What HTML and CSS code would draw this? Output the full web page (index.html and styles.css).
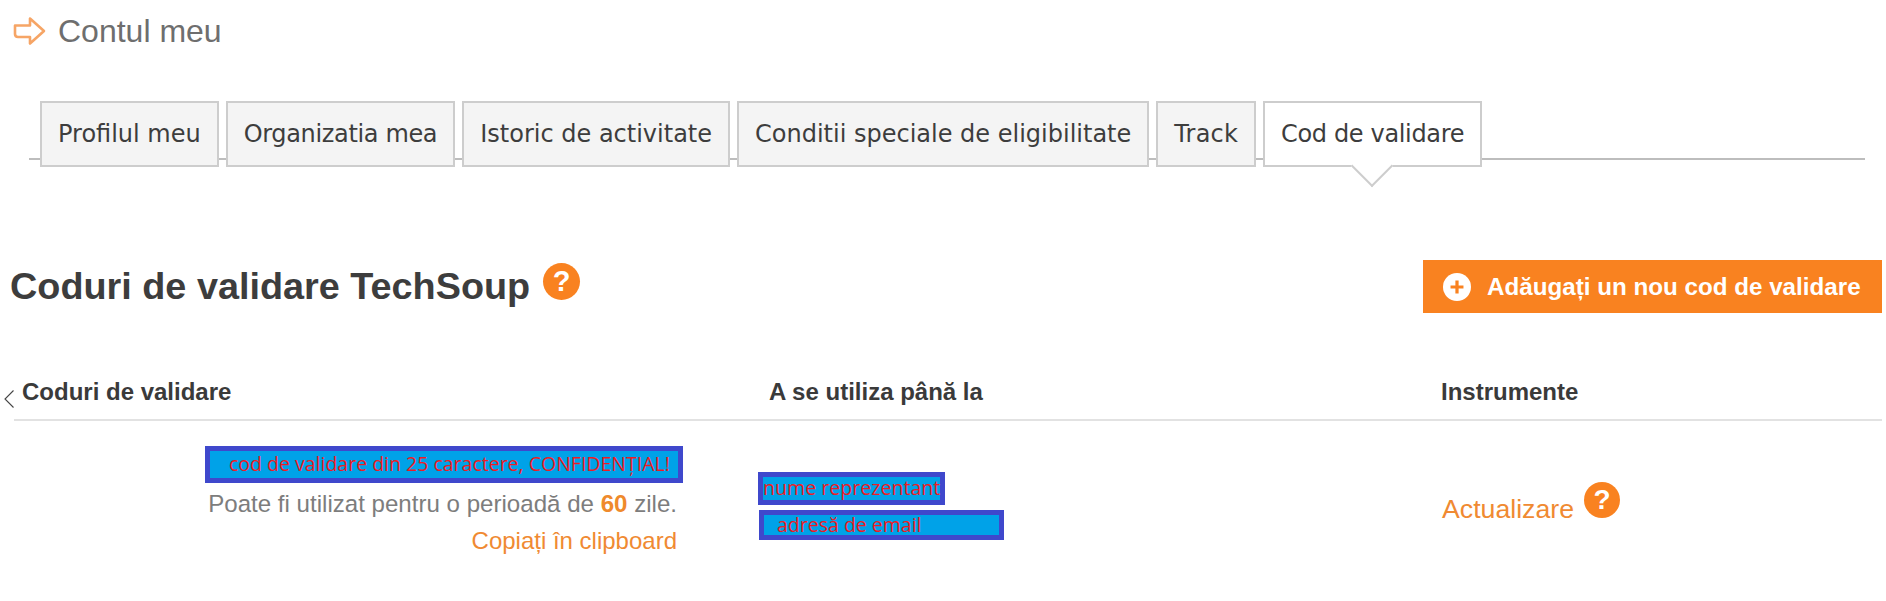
FILE: index.html
```html
<!DOCTYPE html>
<html lang="ro">
<head>
<meta charset="utf-8">
<title>Contul meu</title>
<link rel="stylesheet" href="styles.css">
</head>
<body>
<header class="page-title">
  <svg class="title-arrow" viewBox="0 0 35 30" aria-hidden="true"><path d="M3 9.500H18V2.500L32 15L18 27.500V21H6Q3 21 3 18Z" fill="none" stroke="#f6a566" stroke-width="2.600" stroke-linejoin="round"/></svg>
  <span>Contul meu</span>
</header>
<nav class="tabs">
  <a class="tab">Profilul meu</a>
  <a class="tab tab-tight">Organizatia mea</a>
  <a class="tab">Istoric de activitate</a>
  <a class="tab">Conditii speciale de eligibilitate</a>
  <a class="tab tab-loose">Track</a>
  <a class="tab tab-tight active">Cod de validare</a>
</nav>
<section class="heading-row">
  <div class="heading">
    <h1>Coduri de validare TechSoup</h1>
    <span class="help help-large">?</span>
  </div>
  <a class="add-btn"><span class="plus"><svg viewBox="0 0 26 26" aria-hidden="true"><circle cx="13" cy="13" r="13" fill="#fff"/><path d="M13 7V19M7 13H19" stroke="#f98220" stroke-width="3"/></svg></span>Adăugați un nou cod de validare</a>
</section>
<section class="codes">
  <div class="codes-head">
    <svg class="chevron" viewBox="0 0 10 18" aria-hidden="true"><path d="M9.500 .5L1 9L9.500 17.500" fill="none" stroke="#444" stroke-width="1.100"/></svg>
    <div class="col-code">Coduri de validare</div>
    <div class="col-date">A se utiliza până la</div>
    <div class="col-tools">Instrumente</div>
  </div>
  <div class="codes-row">
    <div class="col-code cell-code">
      <div class="mask mask-code">cod de validare din 25 caractere, CONFIDENȚIAL!</div>
      <p class="note">Poate fi utilizat pentru o perioadă de <b>60</b> zile.</p>
      <a class="link">Copiați în clipboard</a>
    </div>
    <div class="col-date cell-date">
      <div class="mask mask-name">nume reprezentant</div>
      <div class="mask mask-mail">adresă de email</div>
    </div>
    <div class="col-tools cell-tools">
      <a class="link link-large">Actualizare</a>
      <span class="help help-small">?</span>
    </div>
  </div>
</section>
</body>
</html>
```

FILE: styles.css
```css
* { box-sizing: border-box; }
html, body { margin: 0; padding: 0; }
body {
  width: 1886px;
  height: 601px;
  overflow: hidden;
  background: #fff;
  font-family: "Liberation Sans", Arial, sans-serif;
  color: #3d3d3d;
}
.page-title {
  display: flex;
  align-items: center;
  gap: 11px;
  height: 62px;
  padding-left: 12px;
  font-size: 32px;
  color: #6e6e6e;
}
.title-arrow { width: 35px; height: 30px; flex: none; }
.tabs {
  display: flex;
  gap: 7px;
  height: 66px;
  margin: 39px 21px 0 29px;
  padding-left: 11px;
  background: linear-gradient(#bdbdbd, #bdbdbd) 0 57px / 100% 2px no-repeat;
}
.tab {
  display: flex;
  align-items: center;
  padding: 0 16px;
  height: 66px;
  border: 2px solid #cdcdcd;
  background: #f4f4f4;
  font-family: "DejaVu Sans", sans-serif;
  font-size: 24px;
  color: #3d3d3d;
  white-space: nowrap;
}
.tab-tight { letter-spacing: -0.35px; }
.tab-loose { letter-spacing: 0.2px; }
.tab.active { position: relative; background: #fff; }
.tab.active::after {
  content: "";
  position: absolute;
  left: 92px;
  bottom: -16px;
  width: 28px;
  height: 28px;
  background: #fff;
  border-right: 2px solid #cdcdcd;
  border-bottom: 2px solid #cdcdcd;
  transform: rotate(45deg);
}
.heading-row {
  display: flex;
  justify-content: space-between;
  align-items: flex-start;
  margin-top: 93px;
  padding: 0 4px 0 10px;
}
.heading { display: flex; align-items: center; gap: 13px; height: 40px; margin-top: 6px; }
h1 { margin: 0; font-size: 37.800px; line-height: 40px; font-weight: 700; color: #3d3d3d; white-space: nowrap; }
.help {
  display: inline-flex;
  align-items: center;
  justify-content: center;
  border-radius: 50%;
  background: #f98220;
  color: #fff;
  font-weight: 700;
}
.help-large { width: 37px; height: 37px; font-size: 29px; margin-top: -9px; }
.help-small { width: 36px; height: 36px; font-size: 28px; margin-top: -18px; }
.add-btn {
  display: flex;
  align-items: center;
  gap: 16px;
  width: 459px;
  height: 53px;
  padding-left: 20px;
  background: #f98220;
  color: #fff;
  font-size: 24.200px;
  font-weight: 700;
  white-space: nowrap;
}
.plus { display: flex; width: 28px; height: 28px; }
.plus svg { width: 100%; height: 100%; }
.codes { margin: 0 4px 0 14px; }
.codes-head {
  position: relative;
  display: grid;
  grid-template-columns: 747px 672px 1fr;
  align-items: center;
  height: 108px;
  padding-left: 8px;
  padding-top: 51px;
  border-bottom: 2px solid #e2e2e2;
  font-size: 24px;
  font-weight: 700;
  color: #3a3a3a;
}
.chevron { position: absolute; left: -10px; top: 77px; width: 10px; height: 18px; }
.codes-row {
  display: grid;
  grid-template-columns: 737px 672px 1fr;
  padding-top: 25px;
}
.cell-code {
  display: flex;
  flex-direction: column;
  align-items: flex-end;
  width: 663px;
}
.mask {
  background: #00a2e8;
  border: 5px solid #3f48cc;
  color: #ed1c24;
  font-family: "Open Sans", sans-serif;
  white-space: nowrap;
}
.mask-code { width: 478px; height: 37px; margin-right: -6px; padding-left: 19px; font-size: 19.500px; line-height: 26px; }
.note { margin: 6px 0 0; font-size: 24.100px; line-height: 30px; color: #7d7d7d; white-space: nowrap; }
.note b { color: #ef8a2c; }
.link { color: #f08a32; }
.cell-code .link { margin-top: 7px; font-size: 24px; line-height: 30px; }
.cell-date { display: flex; flex-direction: column; padding: 26px 0 0 7px; gap: 5px; }
.mask-name { width: 187px; height: 33px; font-size: 19.600px; line-height: 22px; }
.mask-mail { width: 245px; height: 30px; margin-left: 1px; padding-left: 13px; font-size: 19.500px; line-height: 20px; }
.cell-tools { display: flex; align-items: center; gap: 10px; padding-top: 38px; padding-left: 19px; height: 88px; }
.link-large { font-size: 26.700px; }
```
